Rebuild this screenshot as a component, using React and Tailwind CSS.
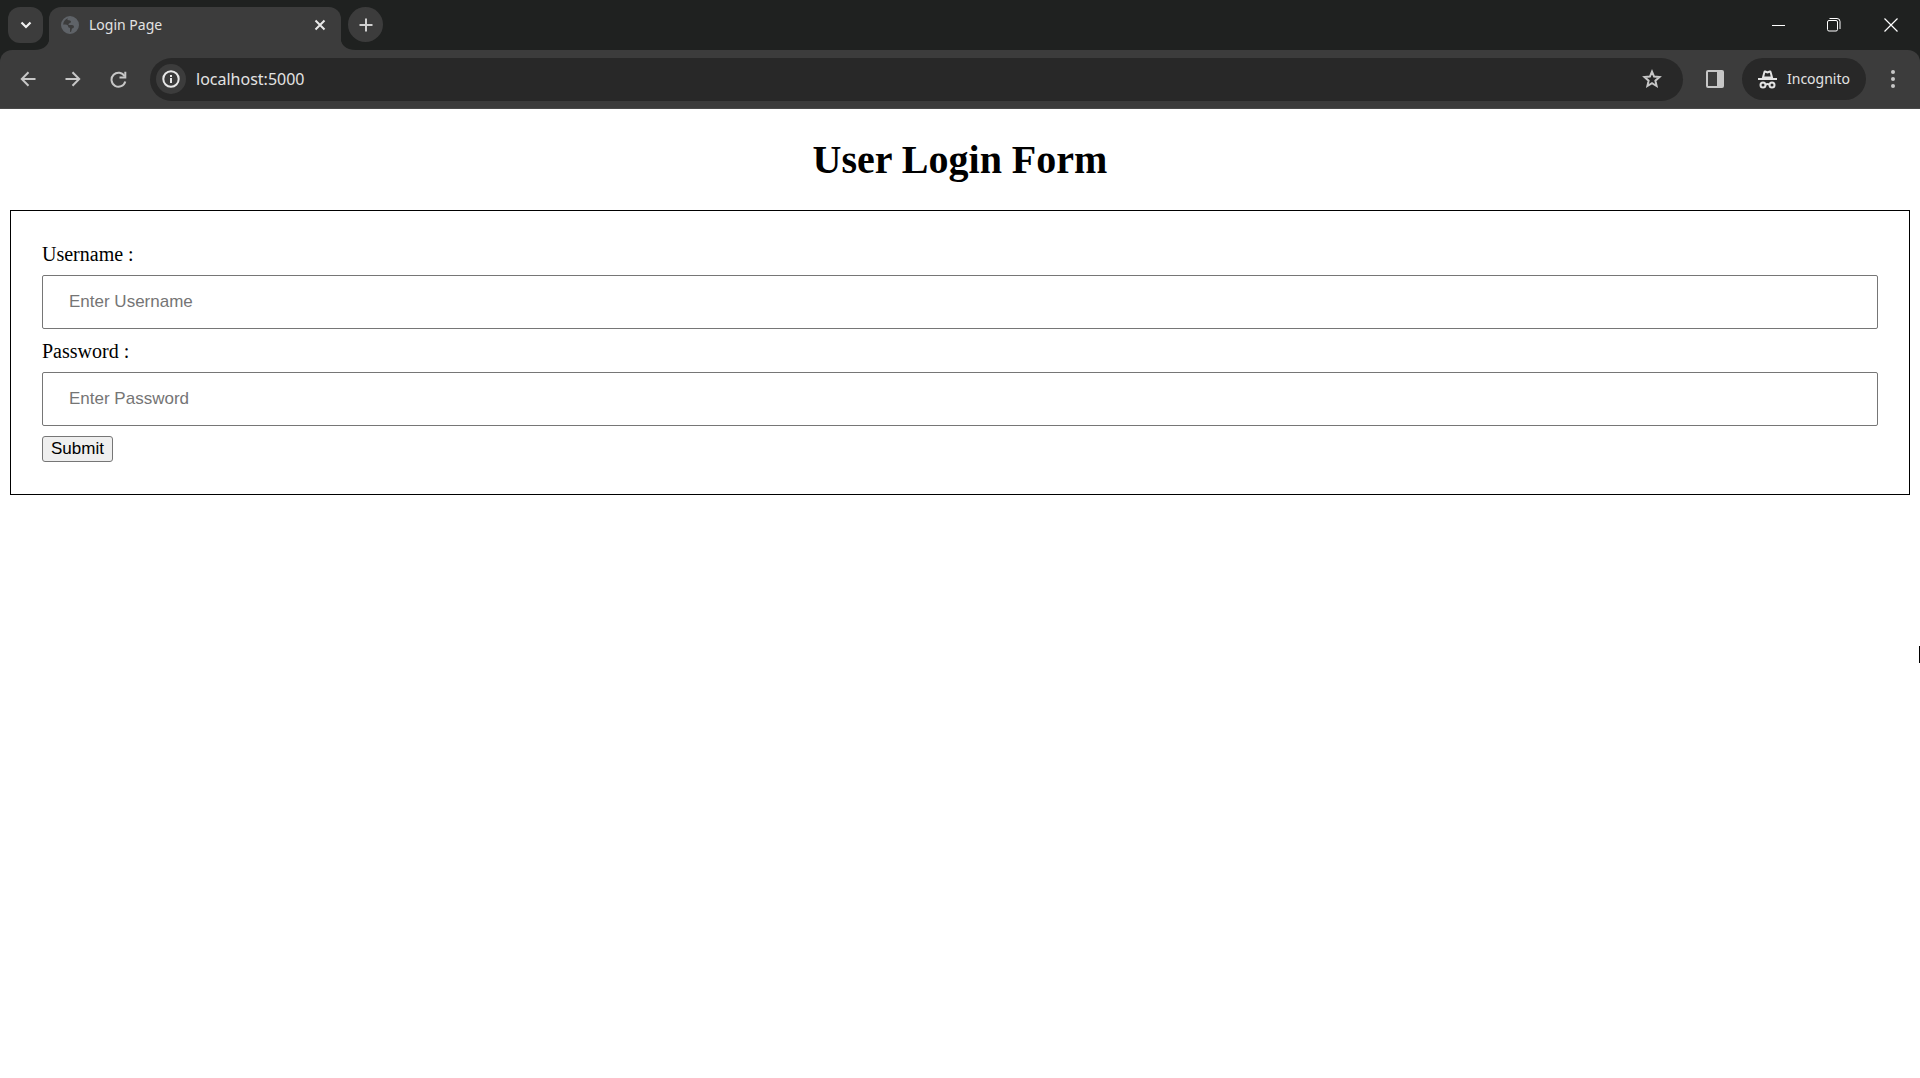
import React from "react";

const uiFont = "font-['Segoe_UI','Noto_Sans',sans-serif]";

function Chevron() {
  return (
    <svg width="12" height="12" viewBox="0 0 12 12" fill="none" stroke="#f2f2f2" strokeWidth="2.2">
      <path d="M1.5 3.5 6 8l4.5-4.5" />
    </svg>
  );
}

function Globe() {
  return (
    <svg width="18" height="18" viewBox="0 0 18 18">
      <circle cx="9" cy="9" r="8" fill="none" stroke="#5f6368" strokeWidth="2" />
      <path d="M7.500 1.500q-1.500 1-1 2.500l2.500.5q1.500.5.8 2L8 7.500q-1 .5-.3 1.500H11q2 0 2 1.800 0 1.500-2 1.700l-1 3.800Q15.500 15.500 17 10.500L16 5 12.500 2z" fill="#5f6368" />
      <path d="M1 8.500h3.500q2.800.2 2.800 2.700l1.700.8v5Q2 16.500 1 8.500z" fill="#5f6368" />
    </svg>
  );
}

function TabClose() {
  return (
    <svg width="12" height="12" viewBox="0 0 12 12" fill="none" stroke="#e8e8e8" strokeWidth="2">
      <path d="M1.5 1.5 10.5 10.5M10.5 1.5 1.5 10.5" />
    </svg>
  );
}

function Plus() {
  return (
    <svg width="14" height="14" viewBox="0 0 14 14" fill="none" stroke="#d0d0d0" strokeWidth="2">
      <path d="M7 .5v13M.5 7h13" />
    </svg>
  );
}

function Arrow({ forward }) {
  return (
    <svg width="16" height="16" viewBox="0 0 16 16" fill="none" stroke="#c7c7c7" strokeWidth="2">
      <path d={forward ? "M.5 8h13.500M7.500 1.200 14.200 8l-6.700 6.800" : "M15.500 8H2M8.500 1.200 1.800 8l6.700 6.800"} />
    </svg>
  );
}

function Reload() {
  return (
    <svg width="17" height="17" viewBox="0 0 17 17" fill="none" stroke="#c7c7c7" strokeWidth="2">
      <path d="M14.600 5.200A7 7 0 1 0 15.300 10.500" />
      <path d="M15.300.8v5.700H9.500" />
    </svg>
  );
}

function Info() {
  return (
    <svg width="18" height="18" viewBox="0 0 18 18" fill="none" stroke="#e8e8e8" strokeWidth="2">
      <circle cx="9" cy="9" r="7.700" />
      <path d="M9 8v5M9 5v2" />
    </svg>
  );
}

function Star() {
  return (
    <svg width="20" height="20" viewBox="0 0 20 20" fill="none" stroke="#c7c7c7" strokeWidth="2">
      <path d="m10 2.600 2.100 5 5.400.5-4.100 3.600 1.200 5.300L10 14.200 5.400 17l1.200-5.300-4.100-3.600 5.400-.5z" />
    </svg>
  );
}

function SidePanel() {
  return (
    <svg width="18" height="18" viewBox="0 0 18 18">
      <rect x="1" y="1" width="16" height="16" rx="1" fill="none" stroke="#c7c7c7" strokeWidth="2" />
      <rect x="11" y="1" width="6" height="16" fill="#c7c7c7" />
    </svg>
  );
}

function Incognito() {
  return (
    <svg width="19" height="19" viewBox="0 0 19 19">
      <path
        d="M3.800 8 5.500 1.700Q5.900.2 7.400.6l2.100.6 2.100-.6q1.500-.4 1.900 1.100L15.200 8zM7.200 2.800 6.300 6.500h6.400l-.9-3.700-2.300.6z"
        fill="#e3e3e3"
        fillRule="evenodd"
      />
      <path d="M0 8h19v2H0z" fill="#e3e3e3" />
      <g fill="none" stroke="#e3e3e3" strokeWidth="2">
        <circle cx="5" cy="15" r="2.500" />
        <circle cx="14" cy="15" r="2.500" />
        <path d="M7.500 14.600q2-1 4 0" />
      </g>
    </svg>
  );
}

function MenuDots() {
  return (
    <svg width="4" height="18" viewBox="0 0 4 18" fill="#c7c7c7">
      <circle cx="2" cy="2" r="2" />
      <circle cx="2" cy="9" r="2" />
      <circle cx="2" cy="16" r="2" />
    </svg>
  );
}

function WindowControls() {
  const button = "flex h-10 w-14 items-center justify-center";
  return (
    <div className="ml-auto flex pt-[5px] text-white">
      <button aria-label="Minimize" className={button}>
        <svg width="13" height="13" fill="none" stroke="currentColor">
          <path d="M0 6.5h13" />
        </svg>
      </button>
      <button aria-label="Restore" className={button}>
        <svg width="14" height="14" fill="none" stroke="currentColor">
          <rect x=".5" y="2.500" width="10" height="10.500" rx="1.500" />
          <path d="M2.500.5H10q3 0 3 3V11" />
        </svg>
      </button>
      <button aria-label="Close window" className="flex h-10 w-[58px] items-center justify-center">
        <svg width="14" height="14" fill="none" stroke="currentColor" strokeWidth="1.200">
          <path d="M.5.5l13 13M13.500.5l-13 13" />
        </svg>
      </button>
    </div>
  );
}

function TabCurve({ flip }) {
  return (
    <svg width="16" height="16" className="shrink-0 self-end" viewBox="0 0 16 16">
      <path d={flip ? "M0 0v16h16Q0 16 0 0z" : "M16 0v16H0Q16 16 16 0z"} fill="#3c3c3c" />
    </svg>
  );
}

function TabStrip() {
  return (
    <div className="flex h-[50px] bg-[#1f2120] pl-2">
      <button aria-label="Search tabs" className="mt-[7px] -mr-[9px] flex h-9 w-[35px] items-center justify-center rounded-xl bg-[#3c3c3c]">
        <Chevron />
      </button>
      <TabCurve />
      <div className="mt-[7px] -mx-px flex w-[292px] items-center rounded-t-xl bg-[#3c3c3c] pb-[7px] pl-3">
        <Globe />
        <span className="ml-2.5 text-sm text-[#e3e3e3]">Login Page</span>
        <button aria-label="Close tab" className="mr-[11px] ml-auto flex size-5 items-center justify-center">
          <TabClose />
        </button>
      </div>
      <TabCurve flip />
      <button aria-label="New tab" className="mt-[7px] -ml-2 flex size-[35px] items-center justify-center rounded-full bg-[#3c3c3c]">
        <Plus />
      </button>
      <WindowControls />
    </div>
  );
}

function Toolbar() {
  const nav = "flex size-9 items-center justify-center";
  return (
    <div className="bg-[#1f2120]">
      <div className="flex h-[59px] items-center rounded-t-xl border-b border-[#4a4a4a] bg-[#3c3c3c] pl-2.5">
        <div className="flex gap-[9px]">
          <button aria-label="Back" className={nav}><Arrow /></button>
          <button aria-label="Forward" className={nav}><Arrow forward /></button>
          <button aria-label="Reload" className={nav}><Reload /></button>
        </div>
        <div className="ml-3.5 flex h-[43px] flex-1 items-center rounded-full bg-[#282828] pr-[21px] pl-1.5">
          <button aria-label="View site information" className="flex size-[30px] items-center justify-center rounded-full bg-[#3c3c3c]">
            <Info />
          </button>
          <input
            aria-label="Address"
            defaultValue="localhost:5000"
            className="ml-2.5 min-w-0 flex-1 bg-transparent text-base text-[#e3e3e3] outline-none"
          />
          <button aria-label="Bookmark this tab">
            <Star />
          </button>
        </div>
        <button aria-label="Side panel" className="mr-[18px] ml-[23px]"><SidePanel /></button>
        <button className="flex h-[42px] items-center gap-2.5 rounded-full bg-[#282828] px-4 text-sm text-[#e3e3e3]">
          <Incognito />
          Incognito
        </button>
        <button aria-label="Menu" className="mx-[25px]"><MenuDots /></button>
      </div>
    </div>
  );
}

function Field({ id, label, type, placeholder }) {
  return (
    <>
      <label htmlFor={id} className="block text-xl leading-6">{label}</label>
      <input
        id={id}
        name={id}
        type={type}
        placeholder={placeholder}
        className="mt-[9px] mb-2.5 block h-[54px] w-full rounded-xs border border-[#767676] px-[26px] font-['Liberation_Sans',sans-serif] text-[17px] placeholder:text-[#757575]"
      />
    </>
  );
}

export default function App() {
  return (
    <div className="relative min-h-screen overflow-hidden bg-white text-black">
      <header className={uiFont}>
        <TabStrip />
        <Toolbar />
      </header>
      <main className="px-2.5 font-['Liberation_Serif',serif]">
        <h1 className="pt-7 pb-[27px] text-center text-[40px] leading-[46px] font-bold">User Login Form</h1>
        <form className="border border-black p-[31px] pb-8" onSubmit={(e) => e.preventDefault()}>
          <Field id="username" label="Username :" type="text" placeholder="Enter Username" />
          <Field id="password" label="Password :" type="password" placeholder="Enter Password" />
          <button
            type="submit"
            className="block h-[26px] rounded-[3px] border border-[#767676] bg-[#efefef] px-2 font-['Liberation_Sans',sans-serif] text-[17px] leading-6"
          >
            Submit
          </button>
        </form>
      </main>
      <div className="absolute top-[646px] right-0 h-[17px] w-px bg-black" />
    </div>
  );
}
